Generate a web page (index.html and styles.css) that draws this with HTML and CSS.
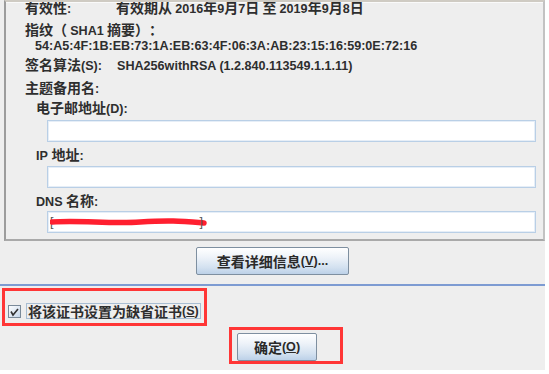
FILE: index.html
```html
<!DOCTYPE html>
<html>
<head>
<meta charset="utf-8">
<link rel="stylesheet" href="styles.css">
</head>
<body>
<div class="frame">
  <div class="panel">
    <div class="row r1"><span class="lbl">有效性<span class="l">:</span></span><span class="val">有效期从&nbsp;<span class="l">2016</span>年<span class="l">9</span>月<span class="l">7</span>日&nbsp;至&nbsp;<span class="l">2019</span>年<span class="l">9</span>月<span class="l">8</span>日</span></div>
    <div class="row r2"><span class="val">指纹（&nbsp;<span class="l">SHA1</span>&nbsp;摘要）：</span></div>
    <div class="row r3 hex"><span class="l">54:A5:4F:1B:EB:73:1A:EB:63:4F:06:3A:AB:23:15:16:59:0E:72:16</span></div>
    <div class="row r4"><span class="lbl">签名算法<span class="l">(S):</span></span><span class="val"><span class="l">SHA256withRSA (1.2.840.113549.1.1.11)</span></span></div>
    <div class="row r5"><span class="val">主题备用名<span class="l">:</span></span></div>
    <div class="row sub r6"><span class="val">电子邮地址<span class="l">(D):</span></span></div>
    <div class="field f1"></div>
    <div class="row sub r7"><span class="val"><span class="l">IP&nbsp;</span>地址<span class="l">:</span></span></div>
    <div class="field f2"></div>
    <div class="row sub r8"><span class="val"><span class="l">DNS&nbsp;</span>名称<span class="l">:</span></span></div>
    <div class="field f3"><span class="redact"><span class="l br">[</span><svg class="scrib" width="158" height="10" viewBox="0 0 158 10"><path d="M2 5 C30 3, 60 7, 90 5 S130 4, 154 6" stroke="#ff1f2f" stroke-width="5.5" fill="none" stroke-linecap="round"/></svg><span class="l br2">]</span></span></div>
  </div>
  <div class="btnrow"><div class="btn wide">查看详细信息<span class="l">(<u>V</u>)...</span></div></div>
  <div class="sep"></div>
  <div class="defrow">
    <span class="check"><svg width="13" height="13" viewBox="0 0 13 13"><defs><linearGradient id="g" x1="0" y1="0" x2="1" y2="1"><stop offset="0" stop-color="#ffffff"/><stop offset="1" stop-color="#c4d6ea"/></linearGradient></defs><rect x="0.5" y="0.5" width="12" height="12" fill="url(#g)" stroke="#7a8a99"/><path d="M3 6.5 L5 10 L10 4" stroke="#333" stroke-width="1.6" fill="none"/></svg></span>
    <span class="deflabel">将该证书设置为缺省证书<span class="l">(<u>S</u>)</span></span>
  </div>
  <div class="okwrap"><div class="btn ok">确定<span class="l">(<u>O</u>)</span></div></div>
</div>
</body>
</html>
```
FILE: styles.css
```css
html, body {
  margin: 0;
  padding: 0;
  background: #ffffff;
}
.frame {
  width: 545px;
  height: 370px;
  background: #eeeeee;
  font-family: "Noto Sans CJK SC", sans-serif;
  font-size: 14px;
  font-weight: 700;
  color: #2e2e2e;
  display: flex;
  flex-direction: column;
  overflow: hidden;
  text-spacing-trim: space-all;
}
.l {
  font-family: "Liberation Sans", Arial, sans-serif;
  font-size: 12.6px;
  font-weight: 700;
}
u {
  text-decoration: underline;
  text-underline-offset: 1px;
}
.panel {
  margin-left: 4px;
  width: 541px;
  height: 241px;
  box-sizing: border-box;
  border-left: 2px solid #9c9c9c;
  border-right: 2px solid #c2c2c2;
  border-bottom: 2px solid #a9a9a9;
  border-top: 2px solid #cfcbc3;
  box-shadow: inset 0 1px 0 #fafafa;
  padding-left: 19px;
  overflow: hidden;
  display: flex;
  flex-direction: column;
}
.row {
  display: flex;
  align-items: center;
  white-space: nowrap;
  flex: none;
}
.lbl {
  width: 91px;
  flex: none;
}
.r1 { height: 18px; margin-top: -4px; }
.r2 { height: 19px; margin-top: 3px; }
.r3 { height: 16px; }
.hex { padding-left: 10px; }
.r4 { height: 17px; margin-top: 1px; }
.r4 .lbl { width: 92px; }
.r5 { height: 18px; margin-top: 6px; }
.sub { padding-left: 11px; }
.r6 { height: 19px; margin-top: 1px; }
.r7 { height: 18px; margin-top: 3px; }
.r8 { height: 18px; margin-top: 3px; }
.field {
  margin-left: 22px;
  margin-right: 7px;
  height: 22px;
  box-sizing: border-box;
  background: #ffffff;
  border: 1px solid #b9cfe6;
  box-shadow: inset 0 0 0 1px #e6eef7;
  flex: none;
}
.f1 { margin-top: 4px; }
.f2 { margin-top: 3px; }
.f3 {
  margin-top: 2px;
  display: flex;
  align-items: center;
  padding-left: 2px;
}
.redact {
  display: flex;
  align-items: center;
  color: #555;
}
.br { font-weight: 400; }
.scrib { margin-left: -4px; }
.br2 { font-weight: 400; margin-left: -8px; }
.btnrow {
  display: flex;
  justify-content: center;
  margin-top: 6px;
}
.btn {
  box-sizing: border-box;
  height: 28px;
  border: 1px solid #7e8fa0;
  border-radius: 2px;
  background: linear-gradient(#ffffff 0%, #eef3f9 35%, #d3e1f0 75%, #bcd1e8 100%);
  display: flex;
  align-items: center;
  justify-content: center;
  color: #2a2a2a;
}
.wide { width: 153px; }
.sep {
  margin-top: 9px;
  height: 2px;
  background: #7d9bd2;
}
.defrow {
  margin-top: 2px;
  margin-left: 2px;
  width: 205px;
  height: 38px;
  box-sizing: border-box;
  border: 3px solid #ff3636;
  padding: 8px 0 0 3px;
  display: flex;
  align-items: center;
  gap: 5px;
}
.check {
  width: 13px;
  height: 13px;
  display: flex;
}
.deflabel {
  border: 1px solid #a8bdd2;
  height: 16px;
  box-sizing: border-box;
  display: flex;
  align-items: center;
  padding: 0 1px;
  white-space: nowrap;
}
.okwrap {
  margin-top: 1px;
  margin-left: 229px;
  width: 114px;
  height: 37px;
  box-sizing: border-box;
  border: 3px solid #ff3636;
  padding: 3px 0 0 5px;
}
.ok { width: 80px; }
```
